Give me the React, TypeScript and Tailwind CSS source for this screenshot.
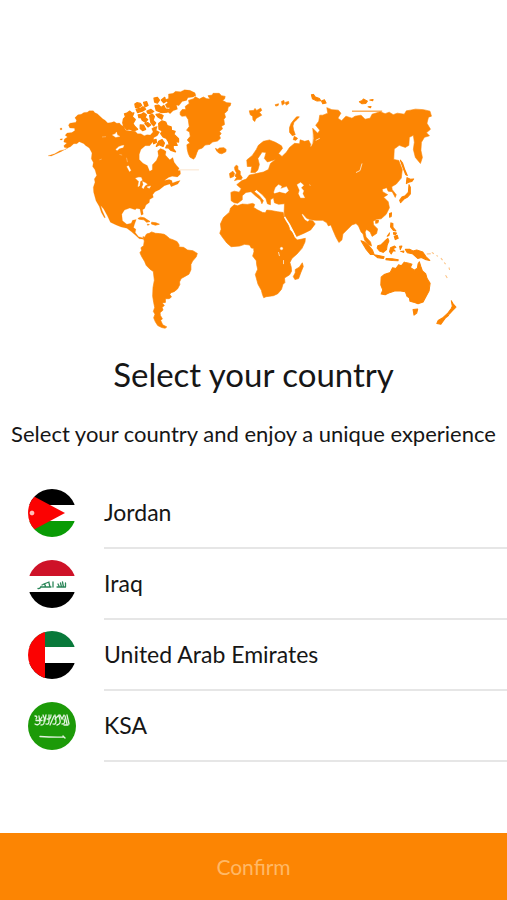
import { useState } from "react";
import type { ReactNode } from "react";

const ORANGE = "#fc8503";

function WorldMap() {
  return (
    <svg
      viewBox="50 88 408 240"
      className="w-[81%]"
      role="img"
      aria-label="World map"
      fill={ORANGE}
      stroke={ORANGE}
      strokeWidth="0.6"
      strokeLinejoin="round"
    >
      {/* North and Central America */}
      <g transform="translate(45 80) scale(0.33333)">
        <path d="M76 135 80 129 98 126 100 120 95 113 104 104 114 102 122 97 132 96 138 92 150 92 155 98 162 101 170 108 178 116 185 120 193 128 203 127 212 124 220 129 228 128 233 134 240 138 247 150 262 152 275 153 282 160 292 160 302 166 310 163 320 164 328 155 324 145 332 140 341 138 338 150 348 155 341 166 330 172 330 182 318 196 305 196 292 207 287 222 287 237 298 248 311 255 318 272 326 268 326 253 338 240 344 226 342 212 350 204 360 208 367 213 365 224 378 238 387 231 391 245 399 256 406 263 402 270 409 270 410 280 401 289 385 287 374 291 362 300 376 297 384 300 386 307 400 302 409 300 402 310 382 318 378 310 362 315 347 327 334 333 327 342 329 350 318 356 317 365 307 373 303 383 297 387 299 400 293 403 289 385 279 383 275 387 259 382 243 388 235 400 237 420 250 430 263 427 267 418 278 416 273 430 270 440 277 445 275 455 285 467 297 470 300 475 287 473 275 462 263 452 250 442 233 438 218 432 201 424 192 405 181 385 172 374 177 390 186 410 183 411 174 395 168 377 158 360 151 335 150 320 155 305 153 295 160 285 155 268 148 258 150 246 144 235 146 218 138 203 126 195 122 190 108 184 101 190 92 190 82 199 70 204 55 213 40 220 25 227 15 226 35 220 50 211 67 207 74 203 64 201 62 196 71 188 62 185 64 176 73 170 66 165 72 158 86 157 95 151 94 144 80 143Z" />
        <path
          strokeWidth="4"
          d="M240 116 246 110 243 101 252 98 258 93 266 99 271 98 266 110 275 118 268 130 274 139 282 147 270 152 257 146 250 148 241 138 238 128ZM274 72 280 68 290 70 294 76 285 82 276 82ZM278 88 290 85 298 80 306 87 296 93 282 97ZM284 104 293 103 300 98 308 104 304 112 312 118 305 126 296 120 292 112 286 112ZM300 67 309 65 313 76 304 80ZM310 93 322 88 330 94 320 100 312 99ZM331 54 341 52 347 60 341 69 333 66ZM334 77 345 75 352 82 360 76 365 86 374 88 370 96 352 97 338 91ZM353 60 363 52 366 64 360 68ZM318 106 326 102 332 109 328 120 336 128 330 137 322 128ZM337 103 347 101 358 106 354 117 344 111ZM304 130 312 127 321 134 313 140ZM290 134 300 135 306 147 297 151 290 145ZM345 130 355 122 366 126 370 136 382 140 383 150 394 153 390 162 404 175 404 185 394 183 400 195 388 195 388 205 395 214 382 210 374 202 366 202 370 194 377 196 374 184 368 174 358 170 351 160 356 152 346 147ZM345 183 355 178 362 188 358 198 346 193 338 198ZM328 180 337 177 338 186 330 190Z"
        />
        <path d="M51 144 56 143 57 148 52 149ZM51 176 58 175 57 179 52 179Z" />
        <path d="M362 59 374 55 374 42 388 40 395 34 410 35 422 29 438 31 453 38 456 46 448 51 432 53 428 61 415 64 405 77 398 75 401 87 388 92 379 101 371 95 378 83 369 83 364 73 372 68Z" />
        <g fill="#fff" stroke="#fff" strokeWidth="1">
          <path d="M207 164 216 160 219 155 222 165 229 168 217 171ZM217 207 226 199 234 196 241 195 239 201 228 204 221 210ZM276 293 286 290 293 291 296 299 290 302 288 315 283 318 286 303ZM297 303 306 307 311 311 304 315 299 324 295 320 299 312ZM310 319 321 316 317 323ZM250 258 255 256 262 270 258 273Z" />
          <path d="M228 222 236 224M249 232 252 245M176 170 188 169M168 238 175 236" />
        </g>
      </g>

      {/* Caribbean and South America */}
      <g transform="translate(120 190) scale(0.33333)" strokeWidth="2">
        <path d="M58 83 66 79 77 81 86 87 94 92 84 94 76 87 62 85ZM99 94 112 96 122 100 110 103 98 99ZM86 100 92 101 87 103Z" />
        <path d="M73 137 78 139 84 129 92 127 99 123 110 127 122 128 136 130 142 134 153 143 164 147 175 152 181 162 180 168 194 169 206 177 222 179 235 187 232 197 221 210 216 220 216 236 210 249 201 254 187 262 182 272 183 280 176 293 166 301 157 304 153 309 158 317 151 322 140 322 140 333 130 335 137 342 130 348 133 356 124 364 125 372 131 382 126 387 132 400 144 406 139 410 129 408 117 402 110 391 105 379 109 368 104 360 108 348 105 333 102 315 103 289 107 267 104 241 94 234 83 223 78 211 69 196 64 185 69 178 67 170 75 164 77 150Z" />
      </g>

      {/* Greenland, Iceland, Svalbard and the British Isles */}
      <g transform="translate(170 80) scale(0.33333)" strokeWidth="2">
        <path d="M34 96 40 88 51 88 49 79 61 70 59 61 74 56 79 50 91 57 103 51 113 56 123 57 117 47 130 45 132 40 150 40 157 47 168 49 166 57 160 61 173 68 185 69 183 77 177 81 175 92 166 100 169 111 164 117 166 133 157 138 160 146 151 153 156 160 151 166 154 174 145 182 130 185 123 192 108 194 100 203 88 207 84 216 79 230 74 236 63 230 58 219 55 206 54 193 63 188 55 179 64 168 62 155 53 150 61 139 58 118 51 107 39 108 34 104Z" />
        <path d="M139 204 146 207 151 203 164 202 171 207 170 214 158 220 149 218 143 212ZM240 92 253 91 257 85 262 91 274 84 277 91 270 96 277 105 270 109 260 115 256 124 251 119 250 108 243 104ZM317 74 327 71 326 76 319 78ZM336 64 343 61 345 70 338 75ZM347 67 357 64 358 70 350 75Z" />
        <path d="M196 260 201 254 206 257 206 267 213 272 213 282 219 291 216 297 206 297 196 300 202 291 197 286 202 277 197 268ZM181 279 191 272 196 279 193 288 183 292Z" />
        <path d="M360 156 360 142 365 129 373 119 381 110 389 110 383 117 373 126 370 137 372 149 377 163 368 166ZM374 168 384 174 379 180 371 178Z" />
        <path d="M31 268H90" stroke="#f8d6b2" />
      </g>

      {/* Europe and Asia */}
      <path d="M231.7 191.7 232 200 235 202 238.5 202.5 243 199 243 195 246.7 191.7 251.7 191 256 195 261 199 262.5 203 264 200 260 195 255 191 257 189 263 194 266.5 198 268 203 271 204 271 199 274 197 275 202 279 203.5 285 203 284.6 211 285 216 290 223 294 230 297 235.5 305 232 311 229 315.5 223 313 220 309.5 219.5 308 221 305 219 302 214 303 213 307 217.5 311 219 316 219.5 323 219.5 327 222 328.5 225 331 224 333 229 336 236 339 241.5 342 239 343 233 348 228 352 224 356 222.7 358.5 225 361 231 363 233 364.5 239 368 243.5 371.5 245 370.5 241 366 236 365 231 366.5 228.5 370 231 372 235.5 376.5 232.5 377.5 228 373.5 224 373 220.5 376.5 218.5 381 218 386 213.5 389.2 207 388 201 383.5 196.5 387.5 194 382.5 191 382 188.5 386.5 187 388 190.5 392 191 395 196.7 396 194 392 189 391.5 186 396 183.5 401 177.5 402 169 398.5 160 393.5 159 394 148.5 399 145 405 147 408.5 145 409 137 413 135 414 142 413 149 415 157 420 163 422 157 420.5 150 421 142 424 137 429 135.5 426 132.5 430 129 426.5 123 428 117 431 116 429.5 111 423 109.5 415 109 410 110 406 110.7 404 114 397 113 393 114.5 389 112 385 113.5 380 111.7 372 114 370 118 365 119 361 115 355 116 352 118 346 116 341.7 120.5 338 118 341 113 338.5 110 332 109.5 327 107.5 328 113 323 115 320 115 319 121 316 125 320 130 318 133 313 128 314 138 312 146 309 140 305 141 300.5 139.5 300 143.5 295 143 290 147 287 151.7 282.5 156 279 153 283 148 282 145.5 276 142 270 139.6 264 141 259 145 257 149 253 155 247.5 159.5 248 166 252.5 166 251.5 172 256 172 258.5 169.5 260 164 258.5 158 262.7 151.7 266.7 152 265 158 268 161.5 276 159 271 163 269 169 264 171.5 257 173 250 174.5 247 178.5 242.7 180 237.5 184 242 188 240 191.5 235 190.5Z" />
      <path d="M352 111H382" fill="none" strokeWidth="1" />

      {/* Africa and Madagascar */}
      <g transform="translate(215 180) scale(0.33333)" strokeWidth="2">
        <path d="M60 72 70 75 84 70 99 71 115 68 121 71 118 80 129 87 145 95 153 96 157 88 169 89 190 93 206 95 208 106 213 119 222 133 226 147 237 158 241 170 248 177 259 175 272 172 271 183 262 202 247 219 232 232 226 244 230 258 231 270 225 281 210 290 211 304 205 310 201 324 190 337 177 343 155 346 148 349 144 339 141 327 131 309 126 291 123 280 130 264 127 251 126 239 115 225 119 212 118 202 111 201 106 192 91 190 76 195 51 197 38 186 25 169 17 157 21 145 19 129 28 110 46 94 49 82Z" />
        <path d="M263 245 266 256 259 273 252 292 241 295 236 286 242 275 242 265 254 258Z" />
      </g>

      {/* Inland seas and lakes */}
      <g fill="#fff" stroke="#fff" strokeWidth="0.4">
        <path d="M274.5 191.5 276 187 279 184 282 185.5 281 188 284 187 287 186 289 190 286 192.5 280 191 275 192.5ZM297.5 184 301 182 304 184.5 301.5 187 304 190 303 193 305 197 301 197 299 193 300 189.5Z" />
        <circle cx="282" cy="247.500" r="1.200" />
        <path d="M285 216 290 224 296 236" fill="none" strokeWidth="1.500" />
        <path d="M279 251 280 255M284 259V263M362 163 360 170 356 172M310 184 310.5 185M311 146 313 142 313 134M316 140 320 138" fill="none" stroke="#fde5cb" strokeWidth="0.9" />
      </g>

      {/* Arctic islands and Japan */}
      <g transform="translate(300 80) scale(0.33333)" strokeWidth="3">
        <path d="M35 44 41 43 47 51 59 55 63 62 52 63 38 56ZM65 63 74 59 79 69 69 71ZM178 65 187 61 190 57 202 63 197 70 186 71ZM209 60 219 58 218 62ZM204 80 213 79 211 83Z" />
        <path d="M300 239 307 248 313 266 321 285 316 282 309 264ZM320 291 330 296 340 295 334 303 325 305 318 309ZM326 312 330 320 330 340 322 349 311 355 301 366 298 359 305 349 315 345 324 335Z" />
      </g>

      {/* South-east Asia and Oceania */}
      <g transform="translate(330 190) scale(0.33333)" strokeWidth="3">
        <path d="M178 68 184 66 183 77 178 79ZM137 89 145 89 143 96 137 97ZM182 96 188 98 188 109 197 120 190 119 181 108ZM192 136 201 133 204 142 195 146ZM190 125 199 126 196 131 190 130ZM171 136 178 126 176 134Z" />
        <path d="M93 149 103 153 116 164 127 177 132 190 121 190 109 176 100 161ZM132 191 145 193 162 197 160 202 143 200ZM168 202 186 203 204 206 203 209 187 208 167 206ZM143 164 153 161 164 150 173 142 176 150 171 162 169 176 159 184 148 180 141 171ZM181 170 193 165 197 169 188 173 195 180 188 180 183 189 178 182ZM208 166 215 165 210 176ZM211 181 221 180 220 184ZM225 175 239 175 248 180 259 177 277 183 287 197 298 208 287 206 273 199 262 202 246 188 231 185Z" />
        <path d="M153 258 162 250 180 244 187 230 197 232 205 221 213 224 222 213 236 216 245 219 240 229 252 237 261 231 263 218 267 212 271 225 276 239 286 248 290 262 299 276 296 298 288 313 278 332 263 337 251 333 239 330 237 319 230 315 225 301 211 299 193 299 178 304 165 310 153 308 158 296 152 281ZM248 354 262 353 259 365 251 371Z" />
        <path d="M362 328 368 338 376 347 367 356 356 368 352 365 362 351 365 344ZM351 366 354 372 344 380 331 398 319 396 323 387 338 378Z" />
        <g opacity="0.5">
          <path d="M289 189 301 188M304 184 310 188M318 193 322 196M331 201 336 207M341 214 345 219M345 252 350 260M355 229 357 236" />
        </g>
      </g>
    </svg>
  );
}

function Flag({ id, children }: { id: string; children: ReactNode }) {
  return (
    <svg viewBox="0 0 48 48" className="size-12 shrink-0" aria-hidden="true">
      <clipPath id={id}>
        <circle cx="24" cy="24" r="24" />
      </clipPath>
      <g clipPath={`url(#${id})`}>{children}</g>
    </svg>
  );
}

const countries = [
  {
    name: "Jordan",
    flag: (
      <Flag id="flag-jordan">
        <path fill="#fff" d="M0 0h48v48H0z" />
        <path d="M0 0h48v16H0z" />
        <path fill="#099b05" d="M0 32h48v16H0z" />
        <path fill="#fb0202" d="M-10 -1 37 24-10 49z" />
        <circle fill="#ffe9e6" cx="4" cy="24" r="2" />
        <path stroke="#ffb9b2" strokeWidth="0.800" d="M4 21.300v5.400M1.300 24h5.400M2.200 22.200l3.600 3.600M5.800 22.200l-3.600 3.600" />
      </Flag>
    ),
  },
  {
    name: "Iraq",
    flag: (
      <Flag id="flag-iraq">
        <path fill="#fff" d="M0 0h48v48H0z" />
        <path fill="#ce1228" d="M0 0h48v16H0z" />
        <path d="M0 32h48v16H0z" />
        <g fill="none" stroke="#2b8659" strokeWidth="1.300" strokeLinecap="round">
          <path d="M10 28.500q2 .5 3-2M13 27h10M14 25l2-1M17 27q1-2-1-3l5-2M22 27l-1-4M25 27v-5M29 27h8M31 26l-1-2M33.500 27l-1-4M35.500 27l-1-5M37.500 27v-4" />
        </g>
      </Flag>
    ),
  },
  {
    name: "United Arab Emirates",
    flag: (
      <Flag id="flag-uae">
        <path fill="#fff" d="M0 0h48v48H0z" />
        <path fill="#08793a" d="M0 0h48v16H0z" />
        <path d="M0 32h48v16H0z" />
        <path fill="#fb0202" d="M0 0h17v48H0z" />
      </Flag>
    ),
  },
  {
    name: "KSA",
    flag: (
      <Flag id="flag-ksa">
        <path fill="#1c9a08" d="M0 0h48v48H0z" />
        <g fill="none" stroke="#e2f3df" strokeWidth="1.300" strokeLinecap="round">
          <path d="M7 14q3 0 1 3M7 22q3 2 5-1l-1-7M8 18.500h6M13 23q4 0 3-5M15 13l2 5 1-5M18 22q3 1 3-3v-6M19 17q4 1 4-4M22 23l4-9M25 22q3 1 3-3l-1-6M27 17l4-4M29 23q4-1 3-5l-1-4M32 13l2 4 2-4M34 22q4 0 2-5M37 14l2 8M39 13l2 9M36 23h4M14 15l-2 3" />
          <path d="M12 34.500q12 .8 24 .5M35 34l2 2" strokeWidth="1.400" />
        </g>
      </Flag>
    ),
  },
];

export default function App() {
  const [selected, setSelected] = useState<string | null>(null);

  return (
    <main className="flex min-h-screen flex-col bg-white font-['Lato',sans-serif] text-[#161616]">
      <div className="flex justify-center pt-22">
        <WorldMap />
      </div>

      <header className="pt-5 text-center">
        <h1 id="country-title" className="text-[33px] leading-12">
          Select your country
        </h1>
        <p className="pt-5 text-[22px] leading-8">Select your country and enjoy a unique experience</p>
      </header>

      <fieldset aria-labelledby="country-title" className="pt-7">
        {countries.map(({ name, flag }) => (
          <label key={name} className="relative flex cursor-pointer items-center gap-7 pl-7">
            <input
              type="radio"
              name="country"
              value={name}
              checked={selected === name}
              onChange={() => setSelected(name)}
              className="absolute inset-0 size-full cursor-pointer opacity-0"
            />
            {flag}
            <span className="flex h-[71px] flex-1 items-center border-b-2 border-[#e6e6e6] text-[23px] leading-8">
              {name}
            </span>
          </label>
        ))}
      </fieldset>

      <button
        type="button"
        disabled={selected === null}
        className="mt-auto h-[67px] w-full bg-[#fc8503] text-[21px] leading-8 text-white disabled:text-[#ffb866]"
      >
        Confirm
      </button>
    </main>
  );
}
